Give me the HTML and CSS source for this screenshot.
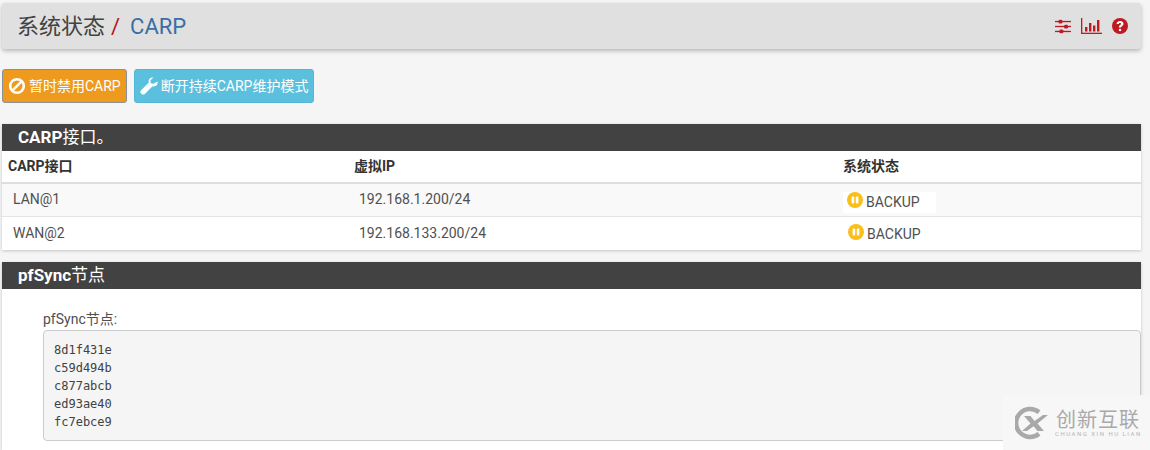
FILE: index.html
```html
<!DOCTYPE html>
<html lang="zh-CN">
<head>
  <meta charset="UTF-8">
  <meta name="viewport" content="width=device-width, initial-scale=1.0">
  <title>系统状态 / CARP</title>
  <link rel="stylesheet" href="styles.css">
</head>
<body>
  <div class="page">
    <header class="crumb-bar">
      <h1 class="crumbs">系统状态<span class="crumb-sep">/</span><a class="crumb-link" href="#">CARP</a></h1>
      <div class="crumb-icons">
        <svg width="16" height="15" viewBox="0 0 17 16" fill="#bd1a22" aria-hidden="true">
          <rect x="0" y="2" width="17" height="1.4"/><rect x="0" y="7.3" width="17" height="1.4"/><rect x="0" y="12.6" width="17" height="1.4"/>
          <rect x="3.5" y="0.7" width="4.5" height="4" rx="1.6"/><rect x="9.5" y="6" width="4.5" height="4" rx="1.6"/><rect x="4.5" y="11.3" width="4.5" height="4" rx="1.6"/>
        </svg>
        <svg width="21" height="16" viewBox="0 0 21 16" fill="#bd1a22" aria-hidden="true">
          <rect x="0" y="0" width="1.3" height="16"/><rect x="0" y="14.7" width="21" height="1.3"/>
          <rect x="4" y="9" width="2.4" height="4.5"/><rect x="8" y="5" width="2.4" height="8.5"/><rect x="12" y="7.5" width="2.4" height="6"/><rect x="16" y="2" width="2.4" height="11.5"/>
        </svg>
        <svg width="16" height="16" viewBox="0 0 16 16" aria-hidden="true">
          <circle cx="8" cy="8" r="8" fill="#bd1a22"/>
          <path d="M4.6 6C4.7 4 6.2 2.9 8.1 2.9c1.9 0 3.4 1.2 3.4 2.9 0 1.3-.8 1.9-1.6 2.5-.5.4-.8.7-.8 1.3H6.9c0-1.3.4-2 1.2-2.6.6-.4 1-.7 1-1.2 0-.5-.5-.9-1.1-.9-.7 0-1.2.4-1.3 1.1z" fill="#fff"/>
          <rect x="6.9" y="10.9" width="2.2" height="2.2" fill="#fff"/>
        </svg>
      </div>
    </header>

    <div class="actions">
      <a class="btn btn-warning" href="#">
        <svg width="18" height="18" viewBox="0 0 18 18" fill="none" stroke="#fff" stroke-width="2.6" aria-hidden="true">
          <circle cx="9" cy="9" r="6.8"/><path d="M4.4 13.6 13.6 4.4"/>
        </svg>
        暂时禁用CARP
      </a>
      <a class="btn btn-info" href="#">
        <svg width="18" height="18" viewBox="0 0 18 18" fill="#fff" aria-hidden="true">
          <path d="M17.6 4.6c.2.8.1 1.9-.4 2.8-.9 1.6-2.9 2.4-4.7 1.8L4.8 16.9c-.9.9-2.3.9-3.2 0l-.5-.5c-.9-.9-.9-2.3 0-3.2l7.7-7.7C8.2 3.8 9 1.8 10.6.9c.9-.5 2-.6 2.8-.4L10.3 3.6l.5 2.7 2.7.5z"/>
        </svg>
        断开持续CARP维护模式
      </a>
    </div>

    <section class="panel panel-carp">
      <h2 class="panel-title">CARP<span class="title-cjk">接口。</span></h2>
      <table class="carp-table">
        <thead>
          <tr>
            <th class="col-if">CARP接口</th>
            <th class="col-ip">虚拟IP</th>
            <th>系统状态</th>
          </tr>
        </thead>
        <tbody>
          <tr class="row-odd">
            <td>LAN@1</td>
            <td>192.168.1.200/24</td>
            <td>
              <span class="status status-first">
                <svg class="pause" width="16" height="16" viewBox="0 0 16 16" aria-hidden="true">
                  <circle cx="8" cy="8" r="8" fill="#f9bf1b"/>
                  <rect x="4.6" y="4.5" width="2.6" height="7" rx="1" fill="#fff"/><rect x="8.8" y="4.5" width="2.6" height="7" rx="1" fill="#fff"/>
                </svg>
                BACKUP
              </span>
            </td>
          </tr>
          <tr>
            <td>WAN@2</td>
            <td>192.168.133.200/24</td>
            <td>
              <span class="status">
                <svg class="pause" width="16" height="16" viewBox="0 0 16 16" aria-hidden="true">
                  <circle cx="8" cy="8" r="8" fill="#f9bf1b"/>
                  <rect x="4.6" y="4.5" width="2.6" height="7" rx="1" fill="#fff"/><rect x="8.8" y="4.5" width="2.6" height="7" rx="1" fill="#fff"/>
                </svg>
                BACKUP
              </span>
            </td>
          </tr>
        </tbody>
      </table>
    </section>

    <section class="panel panel-sync">
      <h2 class="panel-title">pfSync<span class="title-cjk">节点</span></h2>
      <div class="panel-body">
        <div class="sync-label">pfSync节点:</div>
        <pre class="sync-nodes">8d1f431e
c59d494b
c877abcb
ed93ae40
fc7ebce9</pre>
      </div>
    </section>
  </div>

  <div class="watermark">
    <svg width="33" height="34" viewBox="0 0 33 34" aria-hidden="true">
      <path d="M24 6.2A14 14 0 1 0 24 27.8" fill="none" stroke="#a9a9a9" stroke-width="4.5"/>
      <path d="M9 10h6.5l4 5 8.5-6h5L22.5 17.500 29 25h-6.5l-4-4.800L12 25H7l8.500-7.500z" fill="#a9a9a9"/>
    </svg>
    <div class="watermark-text">
      <div class="watermark-cn">创新互联</div>
      <div class="watermark-en">CHUANG XIN HU LIAN</div>
    </div>
  </div>
</body>
</html>
```

FILE: styles.css
```css
* {
  box-sizing: border-box;
}

html, body {
  height: 100%;
  overflow: hidden;
}

body {
  margin: 0;
  background-color: #f5f5f5;
  color: #424242;
  font-family: Roboto, "Noto Sans CJK SC", sans-serif;
  font-size: 14px;
}

.page {
  width: 1141px;
  padding: 3px 0 0 2px;
}

.crumb-bar {
  display: flex;
  justify-content: space-between;
  align-items: center;
  height: 46px;
  padding: 0 13px 0 15px;
  background: #e0e0e0;
  border-radius: 3px;
  box-shadow: 0 2px 4px rgba(0, 0, 0, 0.25);
}

.crumbs {
  margin: 0;
  padding-bottom: 4px;
  font-size: 22px;
  font-weight: 400;
  color: #424242;
}

.crumb-sep {
  margin: 0 10px 0 6px;
  color: #b3141b;
}

.crumb-link {
  color: #3a6ea5;
  text-decoration: none;
}

.crumb-icons {
  display: flex;
  align-items: center;
  gap: 10px;
}

.actions {
  display: flex;
  gap: 7px;
  margin-top: 20px;
}

.btn {
  display: flex;
  align-items: center;
  gap: 3px;
  height: 34px;
  padding: 0 5px 3px 5px;
  border-radius: 3px;
  color: #fff;
  font-size: 14px;
  text-decoration: none;
  white-space: nowrap;
}

.btn svg {
  margin-top: 3px;
}

.btn-warning {
  background: #ee9a1e;
  border: 1px solid #8b8f96;
}

.btn-info {
  background: #5bc0de;
  border: 1px solid #54b6d6;
}

.panel {
  background: #fff;
  box-shadow: 0 1px 3px rgba(0, 0, 0, 0.2);
}

.panel-carp {
  margin-top: 21px;
}

.panel-sync {
  margin-top: 12px;
}

.panel-title {
  margin: 0;
  height: 27px;
  padding-left: 16px;
  background: #424242;
  color: #fff;
  font-size: 17px;
  font-weight: 700;
  line-height: 27px;
}

.title-cjk {
  font-weight: 400;
}

.carp-table {
  width: 100%;
  border-collapse: collapse;
  table-layout: fixed;
}

.carp-table th {
  height: 32px;
  padding: 0 6px 4px;
  text-align: left;
  font-size: 14px;
  font-weight: 700;
  color: #333;
  border-bottom: 2px solid #dedede;
}

.col-if {
  width: 346px;
}

.col-ip {
  width: 489px;
}

.carp-table td {
  height: 33px;
  padding: 0 11px 1px;
  color: #505050;
  border-bottom: 1px solid #e4e4e4;
}

.carp-table tr:last-child td {
  height: 34px;
  border-bottom: 0;
}

.row-odd td {
  background: #f9f9f9;
}

.status {
  display: inline-flex;
  align-items: center;
  gap: 3px;
  margin-left: -7px;
  padding: 0 16px 0 4px;
  background: #fff;
  height: 21px;
  position: relative;
  top: 1px;
  left: 3px;
}

.status-first {
  top: 3px;
  left: 2px;
}

.pause {
  margin-top: -4px;
}

.panel-body {
  height: 161px;
  padding: 21px 0 0 41px;
}

.sync-label {
  height: 20px;
  line-height: 19px;
  color: #505050;
}

.sync-nodes {
  height: 111px;
  margin: 0;
  padding: 10px 10px 0;
  background: #f5f5f5;
  border: 1px solid #ccc;
  border-radius: 4px;
  color: #424242;
  font-family: "DejaVu Sans Mono", monospace;
  font-size: 12px;
  line-height: 18px;
}

.watermark {
  position: absolute;
  left: 1003px;
  top: 395px;
  width: 147px;
  height: 55px;
  display: flex;
  align-items: center;
  gap: 8px;
  padding-left: 12px;
  background: #f7f7f7;
}

.watermark-text {
  margin-top: 2px;
}

.watermark-cn {
  color: #a9a9a9;
  font-size: 20px;
  line-height: 20px;
  letter-spacing: 1px;
}

.watermark-en {
  margin-left: -1px;
  color: #b5b5b5;
  font-size: 6px;
  line-height: 8px;
  letter-spacing: 1.5px;
  white-space: nowrap;
}
```
